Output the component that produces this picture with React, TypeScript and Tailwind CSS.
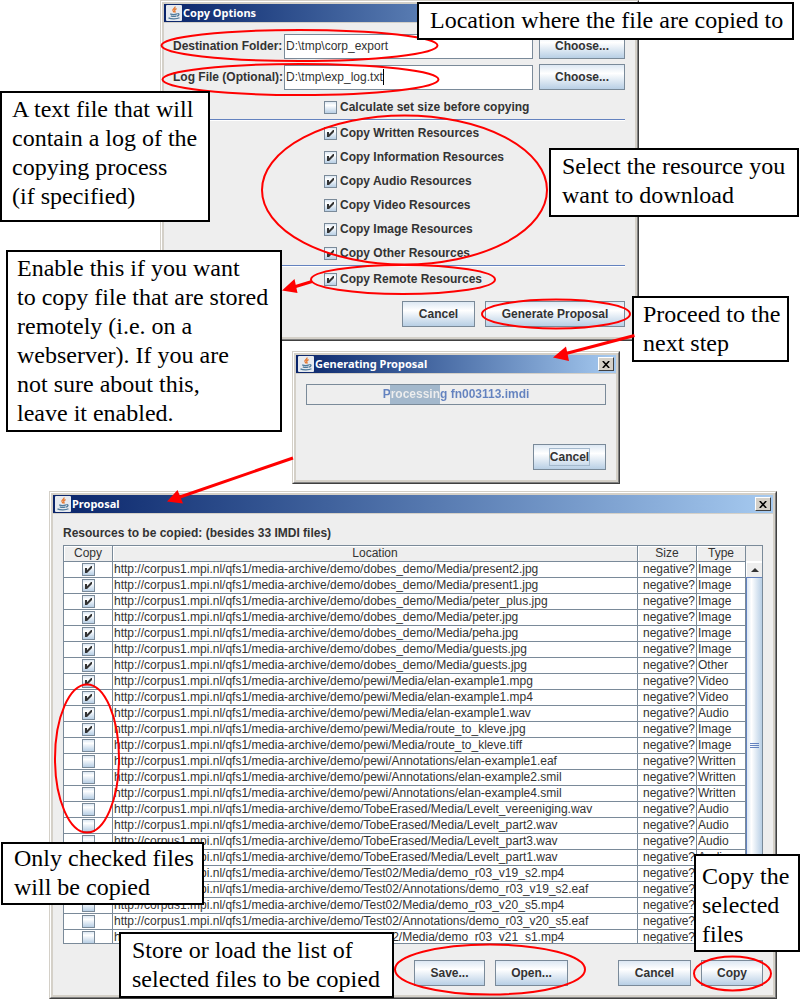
import * as React from "react";
import clsx from "clsx";

const MEDIA_ROOT = "http://corpus1.mpi.nl/qfs1/media-archive/demo/";

interface Resource {
  path: string;
  type: string;
  checked: boolean;
}

const RESOURCES: Resource[] = [
  { path: "dobes_demo/Media/present2.jpg", type: "Image", checked: true },
  { path: "dobes_demo/Media/present1.jpg", type: "Image", checked: true },
  { path: "dobes_demo/Media/peter_plus.jpg", type: "Image", checked: true },
  { path: "dobes_demo/Media/peter.jpg", type: "Image", checked: true },
  { path: "dobes_demo/Media/peha.jpg", type: "Image", checked: true },
  { path: "dobes_demo/Media/guests.jpg", type: "Image", checked: true },
  { path: "dobes_demo/Media/guests.jpg", type: "Other", checked: true },
  { path: "pewi/Media/elan-example1.mpg", type: "Video", checked: true },
  { path: "pewi/Media/elan-example1.mp4", type: "Video", checked: true },
  { path: "pewi/Media/elan-example1.wav", type: "Audio", checked: true },
  { path: "pewi/Media/route_to_kleve.jpg", type: "Image", checked: true },
  { path: "pewi/Media/route_to_kleve.tiff", type: "Image", checked: false },
  { path: "pewi/Annotations/elan-example1.eaf", type: "Written", checked: false },
  { path: "pewi/Annotations/elan-example2.smil", type: "Written", checked: false },
  { path: "pewi/Annotations/elan-example4.smil", type: "Written", checked: false },
  { path: "TobeErased/Media/Levelt_vereeniging.wav", type: "Audio", checked: false },
  { path: "TobeErased/Media/Levelt_part2.wav", type: "Audio", checked: false },
  { path: "TobeErased/Media/Levelt_part3.wav", type: "Audio", checked: false },
  { path: "TobeErased/Media/Levelt_part1.wav", type: "Audio", checked: false },
  { path: "Test02/Media/demo_r03_v19_s2.mp4", type: "Video", checked: false },
  { path: "Test02/Annotations/demo_r03_v19_s2.eaf", type: "Written", checked: false },
  { path: "Test02/Media/demo_r03_v20_s5.mp4", type: "Video", checked: false },
  { path: "Test02/Annotations/demo_r03_v20_s5.eaf", type: "Written", checked: false },
  { path: "Test02/Media/demo_r03_v21_s1.mp4", type: "Video", checked: false },
];

const RESOURCE_KINDS = ["Written", "Information", "Audio", "Video", "Image", "Other"];

const JavaIcon = () => (
  <svg viewBox="0 0 16 16" className="size-4 shrink-0" aria-hidden="true">
    <rect width="16" height="16" rx="1" fill="#e6eaf0" />
    <path
      d="M9 1.5c.8 1.7-2.9 2.4-2 4.3.4.7 1 1 1 1.8M10.6 3.6C9 4.2 8.4 4.8 8.8 5.7c.3.7.5 1.1 0 1.8"
      fill="none"
      stroke="#e8762b"
      strokeWidth="1.3"
    />
    <path
      d="M4.2 8.8c1.6.7 5.2.7 6.8 0M4.8 10.8c1.600.6 4.200.6 5.700 0M11.300 8.700c2.300-.5 2.300 1.800-.3 2.400M2.500 12.900c2.500 1.300 8.500 1.300 11-.1"
      fill="none"
      stroke="#4f7a9b"
      strokeWidth="1.3"
    />
  </svg>
);

interface DialogProps {
  title: string;
  className?: string;
  children: React.ReactNode;
}

const Dialog = ({ title, className, children }: DialogProps) => (
  <section
    aria-label={title}
    className={clsx(
      "border border-t-[#d4d0c8] border-r-[#404040] border-b-[#404040] border-l-[#d4d0c8]",
      className
    )}
  >
    <div className="border border-t-white border-r-[#808080] border-b-[#808080] border-l-white">
      <div className="border-2 border-[#d4d0c8] bg-[#eeeeee]">
        <header className="flex h-[19px] items-center gap-px border-b border-[#d4d0c8] bg-linear-to-r from-[#0a246a] to-[#a6caf0] px-[2px]">
          <JavaIcon />
          <h2 className="flex-1 font-['Noto_Sans',sans-serif] text-[11px] leading-4 font-bold text-white">
            {title}
          </h2>
          <button
            type="button"
            aria-label="Close"
            className="flex h-[14px] w-4 items-center justify-center border border-t-white border-r-[#404040] border-b-[#404040] border-l-white bg-[#d4d0c8]"
          >
            <svg viewBox="0 0 8 7" className="h-[7px] w-2" aria-hidden="true">
              <path d="M.8 0l6.4 7M7.2 0L.8 7" stroke="#000" strokeWidth="1.6" />
            </svg>
          </button>
        </header>
        {children}
      </div>
    </div>
  </section>
);

interface MetalButtonProps {
  label: string;
  className?: string;
  focused?: boolean;
}

const MetalButton = ({ label, className, focused = false }: MetalButtonProps) => (
  <button
    type="button"
    className={clsx(
      "flex h-[26px] items-center justify-center border border-[#7a8a99] bg-linear-to-b from-[#dde8f3] via-white via-35% to-[#b8cfe5] text-xs font-bold",
      className
    )}
  >
    <span className={clsx("leading-4", focused && "border border-[#a3b8cc]")}>
      {label}
    </span>
  </button>
);

interface MetalCheckboxProps {
  id: string;
  checked?: boolean;
  label?: string;
}

const MetalCheckbox = ({ id, checked = false, label }: MetalCheckboxProps) => (
  <span className="relative block size-[13px] shrink-0">
    <input
      id={id}
      type="checkbox"
      defaultChecked={checked}
      aria-label={label}
      className="peer block size-[13px] appearance-none border border-[#7a8a99] bg-linear-to-b from-[#dde8f3] via-white via-30% to-[#b8cfe5]"
    />
    <svg
      viewBox="0 0 13 13"
      className="pointer-events-none absolute inset-0 hidden size-[13px] peer-checked:block"
      aria-hidden="true"
    >
      <path d="M3 5h2v2.300L9 3h1v2L5 10H3z" fill="#333" />
    </svg>
  </span>
);

const LabelledCheckbox = ({ id, checked, label }: Required<MetalCheckboxProps>) => (
  <div className="ml-[150px] flex h-[13px] items-center gap-[3px]">
    <MetalCheckbox id={id} checked={checked} />
    <label htmlFor={id} className="text-xs leading-[13px] font-bold">
      {label}
    </label>
  </div>
);

interface PathFieldProps {
  id: string;
  label: string;
  value: string;
  showCaret?: boolean;
}

const PathField = ({ id, label, value, showCaret = false }: PathFieldProps) => (
  <div className="flex items-center">
    <label htmlFor={id} className="w-[111px] text-xs font-bold whitespace-nowrap">
      {label}
    </label>
    <div className="relative mr-1.5 flex-1">
      <input
        id={id}
        type="text"
        defaultValue={value}
        className="block h-[25px] w-full border border-[#7a8a99] bg-white px-px text-xs outline-none"
      />
      {showCaret && <span className="absolute top-1 left-[99px] h-4 w-px bg-black" />}
    </div>
    <MetalButton label="Choose..." className="w-[86px]" />
  </div>
);

const Separator = () => <hr className="h-[2px] border-t border-b border-t-[#6382bf] border-b-white" />;

const CopyOptionsDialog = () => (
  <Dialog title="Copy Options" className="ml-[160px] w-[479px]">
    <div className="py-[10px] pr-[10px] pl-[9px]">
      <div className="flex flex-col gap-[5px]">
        <PathField id="destination" label="Destination Folder:" value="D:\tmp\corp_export" />
        <PathField id="log-file" label="Log File (Optional):" value="D:\tmp\exp_log.txt" showCaret />
      </div>
      <div className="pt-[11px] pb-[5px] pl-px">
        <LabelledCheckbox id="calculate" checked={false} label="Calculate set size before copying" />
      </div>
      <Separator />
      <div className="flex flex-col gap-[11px] pt-1.5 pb-[5px] pl-px">
        {RESOURCE_KINDS.map((kind) => (
          <LabelledCheckbox key={kind} id={`copy-${kind}`} checked label={`Copy ${kind} Resources`} />
        ))}
      </div>
      <Separator />
      <div className="pt-1.5 pl-px">
        <LabelledCheckbox id="copy-remote" checked label="Copy Remote Resources" />
      </div>
      <div className="mt-[15px] flex justify-end gap-[10px]">
        <MetalButton label="Cancel" className="w-[73px]" />
        <MetalButton label="Generate Proposal" className="w-[140px]" />
      </div>
    </div>
  </Dialog>
);

const GeneratingDialog = () => (
  <Dialog title="Generating Proposal" className="mt-[10px] ml-[292px] w-[328px]">
    <div className="p-[10px]">
      {/* the indeterminate chunk inverts the text that it passes under */}
      <div
        role="progressbar"
        aria-label="Generating proposal"
        className="h-[21px] border border-[#7a8a99] bg-[linear-gradient(to_right,transparent_83px,#a3b8cc_83px,#a3b8cc_133px,transparent_133px)]"
      >
        <p className="bg-[linear-gradient(to_right,#6382bf_83px,#eeeeee_83px,#eeeeee_133px,#6382bf_133px)] bg-clip-text text-center text-xs leading-[19px] font-bold text-transparent">
          Processing fn003113.imdi
        </p>
      </div>
      <div className="mt-[39px] flex justify-end">
        <MetalButton label="Cancel" className="w-[73px]" focused />
      </div>
    </div>
  </Dialog>
);

const headCell =
  "h-4 border-r border-b border-[#7a8a99] bg-[#eeeeee] p-0 text-center leading-[15px] font-normal shadow-[inset_1px_1px_0_white]";
const bodyCell = "h-4 border-r border-b border-[#7a8a99] p-0 leading-[15px] whitespace-nowrap";

const ResourceTable = () => (
  <div className="flex h-[399px] items-start overflow-hidden border border-[#7a8a99] bg-white">
    <div className="flex-1">
      <table className="w-full table-fixed border-separate border-spacing-0 text-xs">
        <colgroup>
          <col className="w-[49px]" />
          <col />
          <col className="w-[59px]" />
          <col className="w-[49px]" />
        </colgroup>
        <thead>
          <tr>
            <th className={headCell}>Copy</th>
            <th className={headCell}>Location</th>
            <th className={headCell}>Size</th>
            <th className={headCell}>Type</th>
          </tr>
        </thead>
        <tbody>
          {RESOURCES.map((resource, index) => (
            <tr key={index}>
              <td className={bodyCell}>
                <div className="flex justify-center">
                  <MetalCheckbox
                    id={`resource-${index}`}
                    checked={resource.checked}
                    label={`Copy ${resource.path}`}
                  />
                </div>
              </td>
              <td className={bodyCell}>
                <span className="pl-px">{MEDIA_ROOT + resource.path}</span>
              </td>
              <td className={clsx(bodyCell, "text-right")}>
                <span className="pr-px">negative?</span>
              </td>
              <td className={bodyCell}>
                <span className="pl-px">{resource.type}</span>
              </td>
            </tr>
          ))}
        </tbody>
      </table>
    </div>
    <div className="flex h-full w-4 flex-col bg-[#eeeeee]">
      <div className="h-4 border-b border-white" />
      <div className="flex h-[15px] items-center justify-center border-t border-l border-white">
        <svg viewBox="0 0 8 4" className="h-1 w-2" aria-hidden="true">
          <path d="M4 0l4 4H0z" fill="#333" />
        </svg>
      </div>
      <div className="flex h-[336px] flex-col items-center justify-center gap-px border-y border-l border-[#6382bf] bg-linear-to-r from-[#dde8f3] via-white via-30% to-[#b8cfe5]">
        <span className="h-px w-[9px] bg-[#6382bf]" />
        <span className="h-px w-[9px] bg-[#6382bf]" />
        <span className="h-px w-[9px] bg-[#6382bf]" />
      </div>
    </div>
  </div>
);

const ProposalDialog = () => (
  <Dialog title="Proposal" className="mt-[7px] ml-[49px] w-[728px]">
    <div className="px-[10px] pt-[11px] pb-[9px]">
      <p className="text-xs leading-4 font-bold">
        Resources to be copied: (besides 33 IMDI files)
      </p>
      <div className="mt-1">
        <ResourceTable />
      </div>
      <div className="mt-4 flex justify-end gap-[50px]">
        <div className="flex gap-[10px]">
          <MetalButton label="Save..." className="w-[71px]" />
          <MetalButton label="Open..." className="w-[73px]" />
        </div>
        <div className="flex gap-[10px]">
          <MetalButton label="Cancel" className="w-[73px]" />
          <MetalButton label="Copy" className="w-[62px]" />
        </div>
      </div>
    </div>
  </Dialog>
);

interface CalloutProps {
  lines: string[];
  className: string;
}

const Callout = ({ lines, className }: CalloutProps) => (
  <p
    className={clsx(
      "absolute flex flex-col gap-[5px] border-2 border-black bg-white font-['Liberation_Serif',serif] text-2xl leading-6 whitespace-nowrap text-black",
      className
    )}
  >
    {lines.map((line) => (
      <span key={line}>{line}</span>
    ))}
  </p>
);

const Highlights = () => (
  <svg
    viewBox="0 0 800 1000"
    className="pointer-events-none absolute top-0 left-0 h-[1000px] w-[800px]"
    fill="none"
    stroke="#ff0000"
    strokeWidth="2"
    aria-hidden="true"
  >
    <ellipse cx="299.5" cy="45.5" rx="138" ry="15.5" />
    <ellipse cx="300.5" cy="79.5" rx="138" ry="15.5" />
    <ellipse cx="404.5" cy="190" rx="142.5" ry="74.5" />
    <ellipse cx="403" cy="279.5" rx="92" ry="14.5" />
    <ellipse cx="556" cy="314" rx="74" ry="14.5" />
    <ellipse cx="87" cy="758.5" rx="32" ry="74" />
    <ellipse cx="490" cy="969.5" rx="95" ry="25" />
    <ellipse cx="732.5" cy="973.5" rx="38.5" ry="17" />
  </svg>
);

const Arrows = () => (
  <svg
    viewBox="0 0 800 1000"
    className="pointer-events-none absolute top-0 left-0 h-[1000px] w-[800px]"
    fill="#ff0000"
    stroke="#ff0000"
    aria-hidden="true"
  >
    <path d="M312 281.5L294 287M634.5 335.5L566 353.5M293 458L180 497" strokeWidth="3" />
    <path
      d="M282 290.5l12.5-11.5 3 14zM553 357.5l13-11 3 14.5zM167 501.5l10.5-11.5 5.5 13.5z"
      stroke="none"
    />
  </svg>
);

export default function App() {
  return (
    <main className="relative flow-root bg-white font-['Liberation_Sans',Arial,sans-serif] text-[#333333]">
      <CopyOptionsDialog />
      <GeneratingDialog />
      <ProposalDialog />
      <Highlights />
      <Callout
        className="top-[2px] left-[417px] h-[38px] w-[377px] pt-1 pl-[11px]"
        lines={["Location where the file are copied to"]}
      />
      <Callout
        className="top-[91px] left-0 h-[131px] w-[210px] pt-1 pl-[10px]"
        lines={["A text file that will", "contain a log of the", "copying process", "(if specified)"]}
      />
      <Callout
        className="top-[148px] left-[549px] h-[69px] w-[250px] pt-1 pl-[11px]"
        lines={["Select the resource you", "want to download"]}
      />
      <Callout
        className="top-[250px] left-[6px] h-[182px] w-[276px] pt-1 pl-[9px]"
        lines={[
          "Enable this if you want",
          "to copy file that are stored",
          "remotely (i.e. on a",
          "webserver). If you are",
          "not sure about this,",
          "leave it enabled.",
        ]}
      />
      <Callout
        className="top-[296px] left-[632px] h-[66px] w-[157px] pt-1 pl-[9px]"
        lines={["Proceed to the", "next step"]}
      />
      <Callout
        className="top-[842px] left-px h-[63px] w-[203px] pt-0.5 pl-[11px]"
        lines={["Only checked files", "will be copied"]}
      />
      <Callout
        className="top-[932px] left-[119px] h-[66px] w-[275px] pt-1 pl-[11px]"
        lines={["Store or load the list of", "selected files to be copied"]}
      />
      <Callout
        className="top-[854px] left-[694px] h-[98px] w-[106px] pt-2 pl-1.5"
        lines={["Copy the", "selected", "files"]}
      />
      <Arrows />
    </main>
  );
}
